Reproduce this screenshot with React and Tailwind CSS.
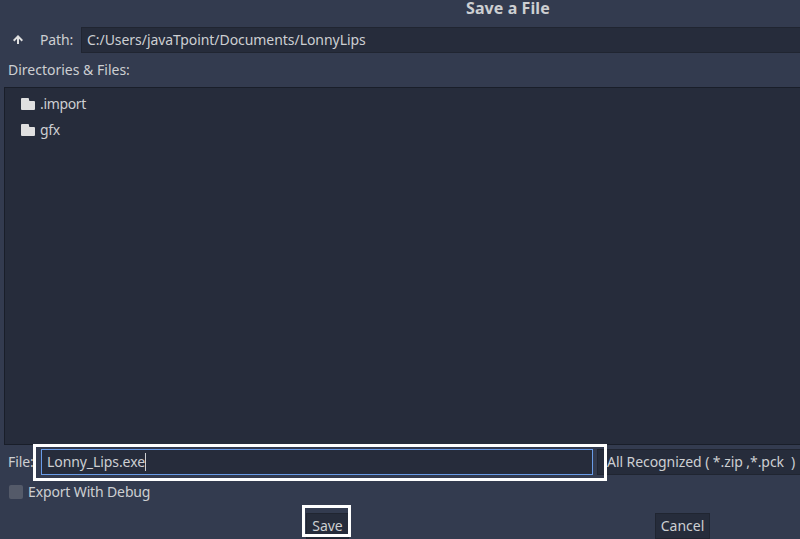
const folders = ['.import', 'gfx'];

function UpArrow() {
  return (
    <svg width="10" height="10" viewBox="0 0 10 10" fill="none" stroke="#e0e0e0" strokeWidth="2">
      <path d="M5 9V1.8M0.7 5.7L5 1.4L9.3 5.7" />
    </svg>
  );
}

function FolderIcon() {
  return (
    <svg width="14" height="12" viewBox="0 0 14 12" fill="#e0e0e0">
      <path d="M1 0h6q1 0 1 1v1q0 1 1 1h4q1 0 1 1v7q0 1-1 1H1q-1 0-1-1V1q0-1 1-1z" />
    </svg>
  );
}

export default function App() {
  return (
    <div className="relative flex h-[539px] w-[800px] flex-col overflow-hidden whitespace-pre bg-[#333b4f] font-['Noto_Sans',sans-serif] text-[14px] leading-[20px] text-[#cdcfd2]">
      <header className="h-[27px] shrink-0 pl-[466px] text-[16px] font-bold leading-[16px] tracking-[0.09px]">Save a File</header>

      <div className="flex h-[26px] shrink-0 items-center">
        <button className="ml-[13px] w-[27px]"><UpArrow /></button>
        <span className="w-[41px] tracking-[-0.15px]">Path:</span>
        <div className="flex h-[26px] flex-1 items-center border border-r-0 border-[#202531] bg-[#262c3b] pl-[5px] tracking-[-0.05px]">
          C:/Users/javaTpoint/Documents/LonnyLips
        </div>
      </div>

      <div className="h-[34px] shrink-0 pl-2 pt-[7px]">Directories &amp; Files:</div>

      <ul className="ml-1 h-[358px] shrink-0 border border-r-0 border-[#191e29] bg-[#262c3b] pl-4 pt-[3px]">
        {folders.map((name) => (
          <li key={name} className="flex h-[26px] items-center gap-[5px]">
            <FolderIcon />
            <span className="tracking-[-0.35px]">{name}</span>
          </li>
        ))}
      </ul>

      <div className="mt-1 flex h-[26px] shrink-0 items-center">
        <span className="w-[33px] pl-2 tracking-[-0.1px]">File:</span>
        <div className="ml-2 flex h-[26px] w-[552px] items-center border border-[#699ce8] bg-[#262c3b] pl-[5px]">
          <span className="tracking-[-0.08px]">Lonny_Lips.exe</span>
          <span className="h-[18px] w-px bg-[#cdcfd2]" />
        </div>
        <div className="ml-1 flex h-[26px] flex-1 items-center border border-r-0 border-[#202531] bg-[#262c3b] pl-[9px] tracking-[-0.07px]">
          All Recognized ( *.zip ,*.pck  )
        </div>
      </div>

      <label className="mt-[7px] flex h-5 shrink-0 items-center gap-[5px] pl-[9px] tracking-[-0.14px]">
        <span className="size-[14px] rounded-[2px] bg-[#545a69]" />
        Export With Debug
      </label>

      <div className="mt-[11px] flex h-[26px] shrink-0">
        <button className="ml-[306px] h-[26px] w-[43px] border border-[#202531] bg-[#262c3b] text-center">Save</button>
        <button className="ml-[306px] h-[26px] w-[55px] border border-[#202531] bg-[#262c3b] text-center">Cancel</button>
      </div>

      {/* Highlight frames over the file name and the save button */}
      <div className="absolute left-[33px] top-[444px] h-[37px] w-[574px] border-[3px] border-white" />
      <div className="absolute left-[302px] top-[505px] h-[32px] w-[49px] border-[3px] border-white" />
    </div>
  );
}
